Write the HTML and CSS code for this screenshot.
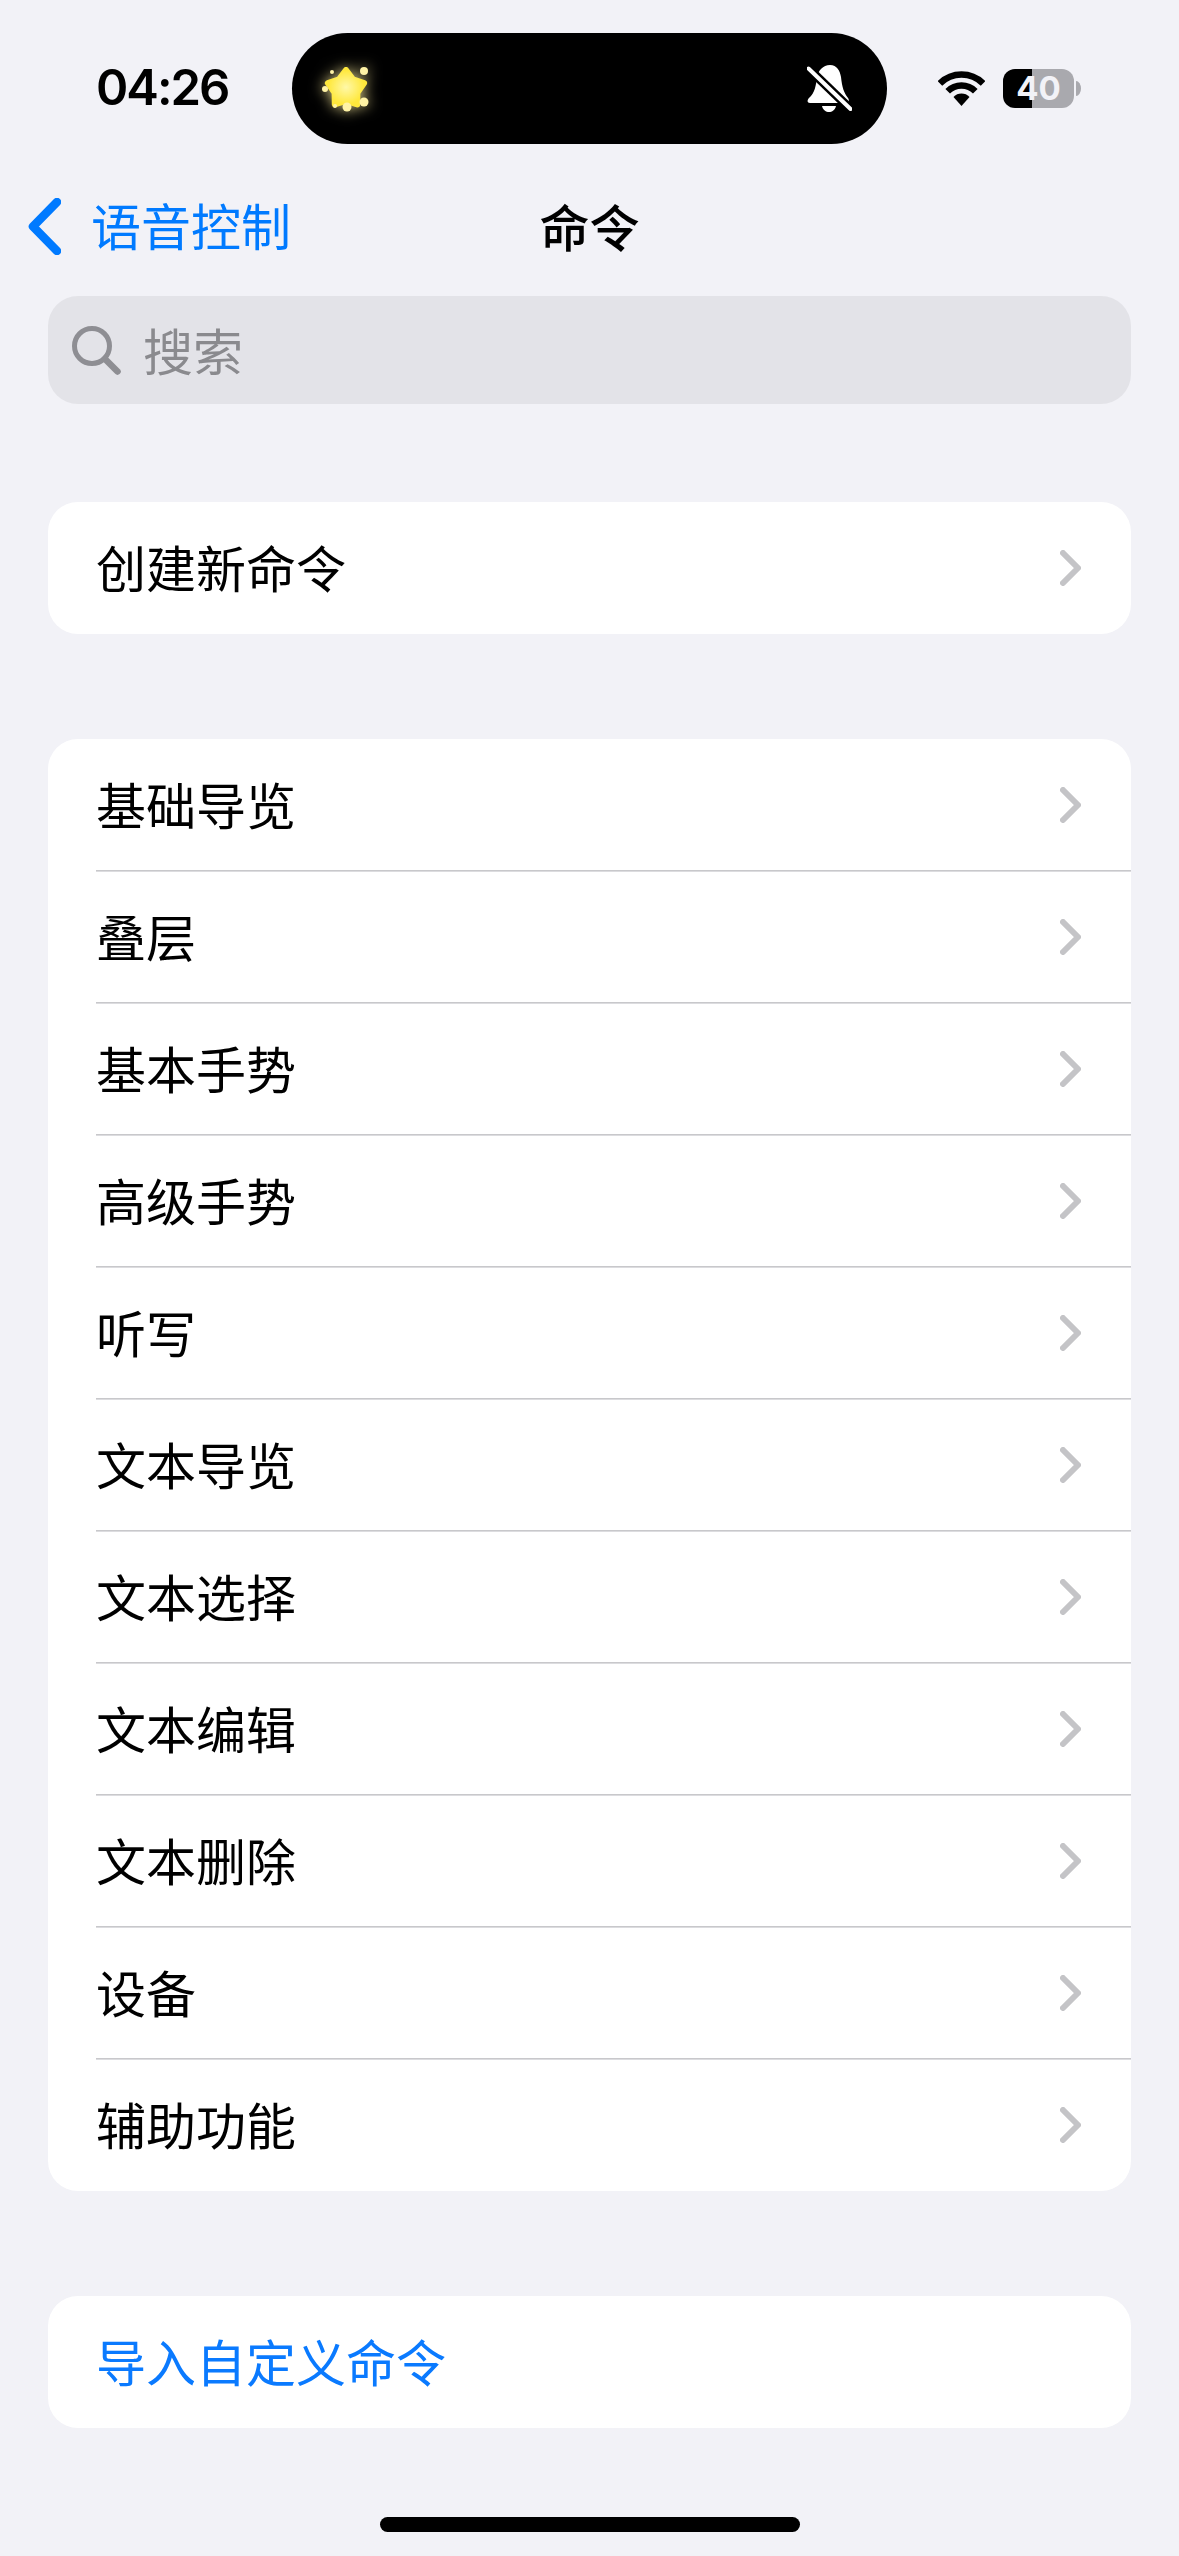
FILE: index.html
```html
<!DOCTYPE html>
<html lang="zh-CN">
<head>
    <meta charset="UTF-8">
    <meta name="viewport" content="width=device-width, initial-scale=1.0">
    <title>命令</title>

    <link rel="stylesheet" href="styles.css">
</head>
<body>
    <div class="status-bar">
        <span class="time">04:26</span>
        <div class="island">
            <svg class="star" viewBox="0 0 60 60">
                <defs>
                    <radialGradient id="star-fill">
                        <stop offset="0" stop-color="#fff8a8"/>
                        <stop offset="1" stop-color="#ffe83c"/>
                    </radialGradient>
                </defs>
                <path d="M30 11 L37 20.3 L48.1 24.1 L41.4 33.7 L41.2 45.4 L30 42 L18.8 45.4 L18.6 33.7 L11.9 24.1 L23 20.3 Z" fill="url(#star-fill)" stroke="url(#star-fill)" stroke-width="6" stroke-linejoin="round"/>
                <g fill="#fff3a6">
                    <circle cx="48" cy="12" r="4"/>
                    <circle cx="16" cy="13" r="2"/>
                    <circle cx="9" cy="30" r="3"/>
                    <circle cx="31" cy="48" r="4.5"/>
                    <circle cx="48" cy="43" r="4.5"/>
                    <circle cx="19" cy="47" r="2"/>
                </g>
            </svg>
            <svg class="bell" viewBox="0 0 45 48">
                <path d="M23 0 C30 0 33 6 34 12 C35 22 37 28 41 33 C43 36 41 38 39 38 L3 38 C0 38 0 35 2 33 C8 28 9 20 10 12 C11 6 16 0 23 0 Z" fill="#fff"/>
                <path d="M15 41 H29 C28 45 25 47 22 47 C19 47 16 45 15 41 Z" fill="#fff"/>
                <line x1="1.5" y1="3.5" x2="43.5" y2="44" stroke="#000" stroke-width="9"/>
                <line x1="1.5" y1="3.5" x2="43.5" y2="44" stroke="#fff" stroke-width="4" stroke-linecap="round"/>
            </svg>
        </div>
        <svg class="wifi" viewBox="0 0 47 35">
            <path d="M1.9 12.4 A30.5 30.5 0 0 1 45.1 12.4" fill="none" stroke="#000" stroke-width="6.5"/>
            <path d="M9.7 20.2 A19.5 19.5 0 0 1 37.3 20.2" fill="none" stroke="#000" stroke-width="6.5"/>
            <path d="M23.5 35 L15.5 26 A11 11 0 0 1 31.5 26 Z" fill="#000"/>
        </svg>
        <div class="battery">
            <span class="battery-body">40</span>
            <span class="battery-nub"></span>
        </div>
    </div>

    <div class="nav">
        <a class="nav-back">
            <svg class="back-icon" viewBox="0 0 33 57">
                <polyline points="29,4 5,28.5 29,53" fill="none" stroke="#007aff" stroke-width="8.5" stroke-linecap="round" stroke-linejoin="round"/>
            </svg>
            <span class="nav-back-label">语音控制</span>
        </a>
        <span class="nav-title">命令</span>
    </div>

    <div class="search">
        <svg class="search-icon" viewBox="0 0 49 49">
            <circle cx="20" cy="20" r="17.5" fill="none" stroke="#8e8e93" stroke-width="5"/>
            <line x1="33" y1="33" x2="45.5" y2="45.5" stroke="#8e8e93" stroke-width="6.5" stroke-linecap="round"/>
        </svg>
        <span class="search-label">搜索</span>
    </div>

    <div class="card first-card">
        <a class="row"><div class="row-inner"><span class="row-label">创建新命令</span><svg class="chevron" viewBox="0 0 21 36"><polyline points="3,3 18,18 3,33"/></svg></div></a>
    </div>

    <div class="card">
        <a class="row"><div class="row-inner"><span class="row-label">基础导览</span><svg class="chevron" viewBox="0 0 21 36"><polyline points="3,3 18,18 3,33"/></svg></div></a>
        <a class="row"><div class="row-inner"><span class="row-label">叠层</span><svg class="chevron" viewBox="0 0 21 36"><polyline points="3,3 18,18 3,33"/></svg></div></a>
        <a class="row"><div class="row-inner"><span class="row-label">基本手势</span><svg class="chevron" viewBox="0 0 21 36"><polyline points="3,3 18,18 3,33"/></svg></div></a>
        <a class="row"><div class="row-inner"><span class="row-label">高级手势</span><svg class="chevron" viewBox="0 0 21 36"><polyline points="3,3 18,18 3,33"/></svg></div></a>
        <a class="row"><div class="row-inner"><span class="row-label">听写</span><svg class="chevron" viewBox="0 0 21 36"><polyline points="3,3 18,18 3,33"/></svg></div></a>
        <a class="row"><div class="row-inner"><span class="row-label">文本导览</span><svg class="chevron" viewBox="0 0 21 36"><polyline points="3,3 18,18 3,33"/></svg></div></a>
        <a class="row"><div class="row-inner"><span class="row-label">文本选择</span><svg class="chevron" viewBox="0 0 21 36"><polyline points="3,3 18,18 3,33"/></svg></div></a>
        <a class="row"><div class="row-inner"><span class="row-label">文本编辑</span><svg class="chevron" viewBox="0 0 21 36"><polyline points="3,3 18,18 3,33"/></svg></div></a>
        <a class="row"><div class="row-inner"><span class="row-label">文本删除</span><svg class="chevron" viewBox="0 0 21 36"><polyline points="3,3 18,18 3,33"/></svg></div></a>
        <a class="row"><div class="row-inner"><span class="row-label">设备</span><svg class="chevron" viewBox="0 0 21 36"><polyline points="3,3 18,18 3,33"/></svg></div></a>
        <a class="row"><div class="row-inner"><span class="row-label">辅助功能</span><svg class="chevron" viewBox="0 0 21 36"><polyline points="3,3 18,18 3,33"/></svg></div></a>
    </div>

    <div class="card">
        <a class="row row-link"><div class="row-inner"><span class="row-label">导入自定义命令</span></div></a>
    </div>

    <div class="home-bar"></div>
</body>
</html>
```

FILE: styles.css
```css
body{
    margin: 0;
    width: 1179px;
    height: 2556px;
    overflow: hidden;
    background-color: #f2f2f7;
    color: #000;
    font-family: "Noto Sans CJK SC", "Liberation Sans", sans-serif;
    font-size: 50px;
}

/* status bar */
.status-bar{
    display: flex;
    align-items: center;
    padding: 33px 0 0 96px;
    height: 111px;
}
.time{
    width: 196px;
    margin-top: -2px;
    font-family: Inter, "Liberation Sans", sans-serif;
    font-size: 49px;
    font-weight: 600;
    letter-spacing: -2px;
    line-height: 1;
}
.island{
    width: 595px;
    height: 111px;
    box-sizing: border-box;
    padding: 0 35px 0 24px;
    display: flex;
    align-items: center;
    justify-content: space-between;
    background-color: #000;
    border-radius: 56px;
}
.star{
    width: 60px;
    height: 60px;
    filter: drop-shadow(0 0 7px rgba(255, 240, 160, 0.8));
}
.bell{
    width: 45px;
    height: 48px;
}
.wifi{
    width: 47px;
    height: 35px;
    margin-left: 51px;
}
.battery{
    display: flex;
    align-items: center;
    gap: 2px;
    margin-left: 18px;
}
.battery-body{
    width: 71px;
    height: 39px;
    display: flex;
    align-items: center;
    justify-content: center;
    border-radius: 12px;
    background: linear-gradient(90deg, #000 29px, #a9a9ae 29px);
    color: #f2f2f7;
    font-family: Inter, "Liberation Sans", sans-serif;
    font-size: 33px;
    font-weight: 700;
    line-height: 1;
}
.battery-nub{
    width: 5px;
    height: 15px;
    background-color: #a9a9ae;
    border-radius: 0 100% 100% 0 / 0 50% 50% 0;
}

/* nav */
.nav{
    display: grid;
    grid-template-columns: 1fr auto 1fr;
    align-items: center;
    height: 112px;
    margin-top: 26px;
}
.nav-back{
    display: flex;
    align-items: center;
    gap: 30px;
    padding-left: 28px;
    color: #007aff;
}
.nav-back-label{
    margin-bottom: 5px;
}
.back-icon{
    width: 33px;
    height: 57px;
}
.nav-title{
    font-weight: 500;
    margin-bottom: 2px;
}

/* search */
.search{
    display: flex;
    align-items: center;
    gap: 22px;
    height: 108px;
    margin: 14px 48px 0;
    padding-left: 24px;
    background-color: #e3e3e8;
    border-radius: 30px;
    color: #8a8a8e;
}
.search-label{
    margin-bottom: 3px;
}
.search-icon{
    width: 49px;
    height: 49px;
}

/* list cards */
.card{
    margin: 105px 48px 0;
    background-color: #fff;
    border-radius: 30px;
    overflow: hidden;
}
.first-card{
    margin-top: 98px;
}
.row{
    display: block;
    padding-left: 48px;
}
.row-inner{
    display: flex;
    align-items: center;
    justify-content: space-between;
    height: 132px;
    box-sizing: border-box;
    padding-right: 50px;
    border-bottom: 1px solid #c8c8cb;
    box-shadow: 0 1px 0 #dcdcdf;
}
.row:last-child .row-inner{
    border-bottom-color: transparent;
}
.row-label{
    margin-bottom: 3px;
}
.row-link{
    color: #0a7aff;
}
.chevron{
    width: 21px;
    height: 36px;
    margin-top: 1px;
}
.chevron polyline{
    fill: none;
    stroke: #c4c4c7;
    stroke-width: 6;
    stroke-linecap: round;
    stroke-linejoin: round;
}

.home-bar{
    width: 420px;
    height: 15px;
    margin: 89px auto 0;
    background-color: #000;
    border-radius: 8px;
}
```
